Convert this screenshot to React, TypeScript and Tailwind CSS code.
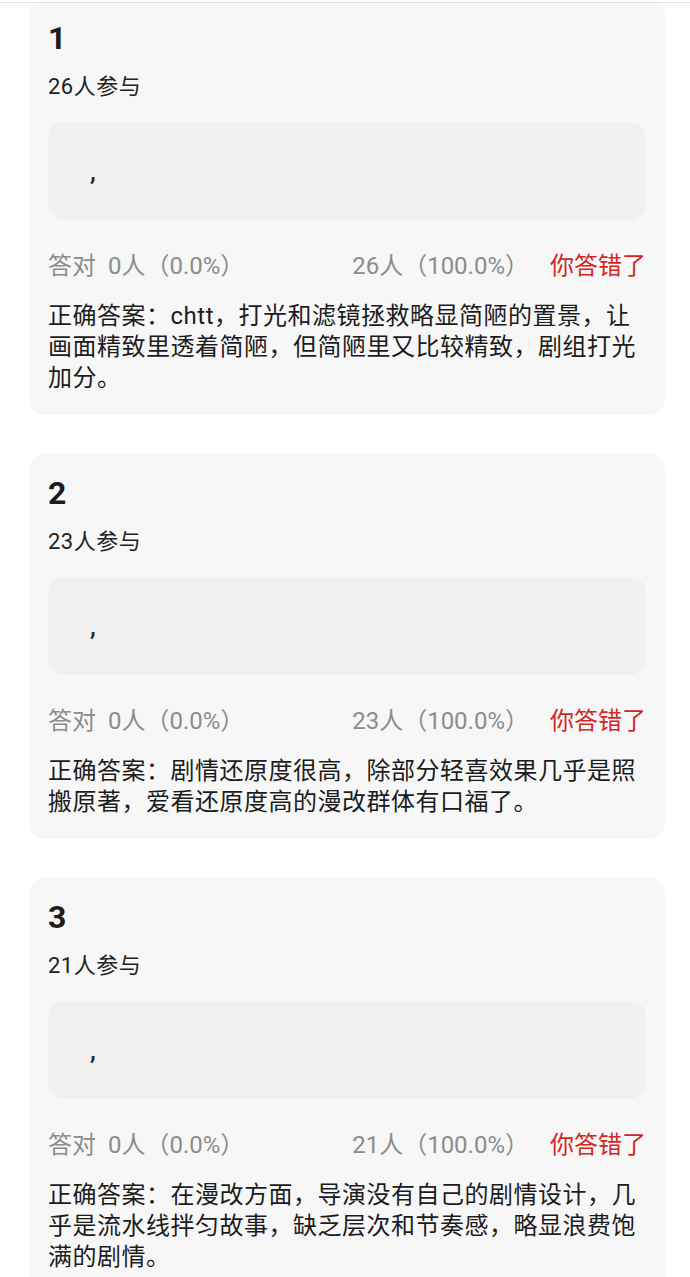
type Question = {
  no: number;
  joined: number;
  wrong: number;
  answer: string;
};

const questions: Question[] = [
  {
    no: 1,
    joined: 26,
    wrong: 26,
    answer:
      '正确答案：chtt，打光和滤镜拯救略显简陋的置景，让画面精致里透着简陋，但简陋里又比较精致，剧组打光加分。',
  },
  {
    no: 2,
    joined: 23,
    wrong: 23,
    answer: '正确答案：剧情还原度很高，除部分轻喜效果几乎是照搬原著，爱看还原度高的漫改群体有口福了。',
  },
  {
    no: 3,
    joined: 21,
    wrong: 21,
    answer:
      '正确答案：在漫改方面，导演没有自己的剧情设计，几乎是流水线拌匀故事，缺乏层次和节奏感，略显浪费饱满的剧情。',
  },
];

function QuestionCard({ q }: { q: Question }) {
  return (
    <div className="w-[636px] ml-[29px] rounded-[16px] bg-[#f7f7f7] px-[19px] pt-[20px] pb-[21px]">
      <div className="text-[32px] leading-[40px] font-bold text-[#1c1c1c]">{q.no}</div>
      <div className="mt-[14px] text-[22px] leading-[30px] tracking-[0.5px] text-[#222]">{q.joined}人参与</div>

      {/* user's answer box */}
      <div className="mt-[20px] h-[98px] rounded-[16px] bg-[#f0f0f0] flex items-center pl-[42px] text-[26px] font-medium text-[#2a2a2a]">
        ,
      </div>

      {/* stats */}
      <div className="mt-[30px] flex justify-between items-center text-[24px] leading-[32px] text-[#8c8c8c]">
        <span>答对&nbsp;&nbsp;0人（0.0%）</span>
        <div className="flex items-center gap-[21px]">
          <span>{q.wrong}人（100.0%）</span>
          <span className="text-[#d3261f]">你答错了</span>
        </div>
      </div>

      <p className="mt-[19px] text-[24px] leading-[31px] tracking-[0.5px] text-[#1c1c1c]">{q.answer}</p>
    </div>
  );
}

export default function App() {
  return (
    <div
      className="relative min-h-screen bg-white"
      style={{ fontFamily: 'Roboto, "Noto Sans CJK SC", sans-serif' }}
    >
      {/* top edge of the header */}
      <div className="absolute top-0 left-0 right-0 z-10 h-[5px] bg-white border-b border-[#e4e4e4]" />

      <div className="flex flex-col gap-[38px] -mt-[2px] pb-[40px]">
        {questions.map((q) => (
          <QuestionCard key={q.no} q={q} />
        ))}
      </div>
    </div>
  );
}
